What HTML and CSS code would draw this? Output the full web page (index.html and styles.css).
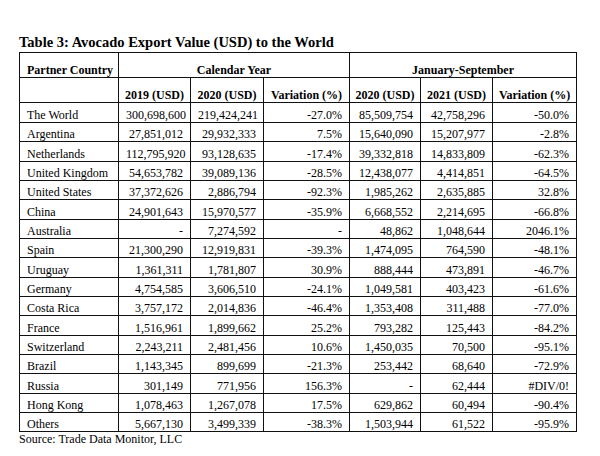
FILE: index.html
```html
<!DOCTYPE html>
<html lang="en">
<head>
<meta charset="utf-8">
<title>Avocado Export Value</title>
<link rel="stylesheet" href="styles.css">
</head>
<body>
<div class="page">
  <h1 class="title">Table 3: Avocado Export Value (USD) to the World</h1>
  <table class="data">
    <colgroup>
      <col class="c1"><col class="c2"><col class="c3"><col class="c4"><col class="c5"><col class="c6"><col class="c7">
    </colgroup>
    <thead>
      <tr class="h">
        <th class="left">Partner Country</th>
        <th colspan="3">Calendar Year</th>
        <th colspan="3">January-September</th>
      </tr>
      <tr class="h">
        <th></th>
        <th>2019 (USD)</th>
        <th>2020 (USD)</th>
        <th>Variation (%)</th>
        <th>2020 (USD)</th>
        <th>2021 (USD)</th>
        <th>Variation (%)</th>
      </tr>
    </thead>
    <tbody>
      <tr class="first"><td>The World</td><td>300,698,600</td><td>219,424,241</td><td>-27.0%</td><td>85,509,754</td><td>42,758,296</td><td>-50.0%</td></tr>
      <tr><td>Argentina</td><td>27,851,012</td><td>29,932,333</td><td>7.5%</td><td>15,640,090</td><td>15,207,977</td><td>-2.8%</td></tr>
      <tr><td>Netherlands</td><td>112,795,920</td><td>93,128,635</td><td>-17.4%</td><td>39,332,818</td><td>14,833,809</td><td>-62.3%</td></tr>
      <tr><td>United Kingdom</td><td>54,653,782</td><td>39,089,136</td><td>-28.5%</td><td>12,438,077</td><td>4,414,851</td><td>-64.5%</td></tr>
      <tr><td>United States</td><td>37,372,626</td><td>2,886,794</td><td>-92.3%</td><td>1,985,262</td><td>2,635,885</td><td>32.8%</td></tr>
      <tr><td>China</td><td>24,901,643</td><td>15,970,577</td><td>-35.9%</td><td>6,668,552</td><td>2,214,695</td><td>-66.8%</td></tr>
      <tr><td>Australia</td><td>-</td><td>7,274,592</td><td>-</td><td>48,862</td><td>1,048,644</td><td>2046.1%</td></tr>
      <tr><td>Spain</td><td>21,300,290</td><td>12,919,831</td><td>-39.3%</td><td>1,474,095</td><td>764,590</td><td>-48.1%</td></tr>
      <tr><td>Uruguay</td><td>1,361,311</td><td>1,781,807</td><td>30.9%</td><td>888,444</td><td>473,891</td><td>-46.7%</td></tr>
      <tr><td>Germany</td><td>4,754,585</td><td>3,606,510</td><td>-24.1%</td><td>1,049,581</td><td>403,423</td><td>-61.6%</td></tr>
      <tr><td>Costa Rica</td><td>3,757,172</td><td>2,014,836</td><td>-46.4%</td><td>1,353,408</td><td>311,488</td><td>-77.0%</td></tr>
      <tr><td>France</td><td>1,516,961</td><td>1,899,662</td><td>25.2%</td><td>793,282</td><td>125,443</td><td>-84.2%</td></tr>
      <tr><td>Switzerland</td><td>2,243,211</td><td>2,481,456</td><td>10.6%</td><td>1,450,035</td><td>70,500</td><td>-95.1%</td></tr>
      <tr><td>Brazil</td><td>1,143,345</td><td>899,699</td><td>-21.3%</td><td>253,442</td><td>68,640</td><td>-72.9%</td></tr>
      <tr><td>Russia</td><td>301,149</td><td>771,956</td><td>156.3%</td><td>-</td><td>62,444</td><td>#DIV/0!</td></tr>
      <tr><td>Hong Kong</td><td>1,078,463</td><td>1,267,078</td><td>17.5%</td><td>629,862</td><td>60,494</td><td>-90.4%</td></tr>
      <tr><td>Others</td><td>5,667,130</td><td>3,499,339</td><td>-38.3%</td><td>1,503,944</td><td>61,522</td><td>-95.9%</td></tr>
    </tbody>
  </table>
  <p class="source">Source: Trade Data Monitor, LLC</p>
</div>
</body>
</html>
```

FILE: styles.css
```css
html, body {
  margin: 0;
  padding: 0;
  background: #ffffff;
}

.page {
  padding: 34px 19px 0 19px;
  font-family: "Liberation Serif", "Times New Roman", serif;
  color: #000;
}

.title {
  margin: 0 0 2px 0;
  font-size: 14.5px;
  line-height: 16px;
  font-weight: bold;
}

.data {
  border-collapse: collapse;
  table-layout: fixed;
  width: 558px;
  font-size: 12px;
  line-height: 14px;
  border: 1px solid #444;
}

.c1 { width: 99px; }
.c2 { width: 72px; }
.c3 { width: 73px; }
.c4 { width: 86px; }
.c5 { width: 71px; }
.c6 { width: 72px; }
.c7 { width: 84px; }

.data th,
.data td {
  border: 1px solid #111;
  padding: 0 7px 0 7px;
  vertical-align: bottom;
  white-space: nowrap;
}

.data th {
  font-weight: bold;
  text-align: center;
  padding: 0 2px;
}

.data th.left {
  text-align: left;
  padding-left: 7px;
}

.data tr.h { height: 25px; }
.data tbody tr { height: 19.33px; }
.data tbody tr.first { height: 20px; }

.data td { text-align: right; }
.data td:first-child { text-align: left; }

.source {
  margin: 0;
  font-size: 12px;
  line-height: 14px;
}
```
